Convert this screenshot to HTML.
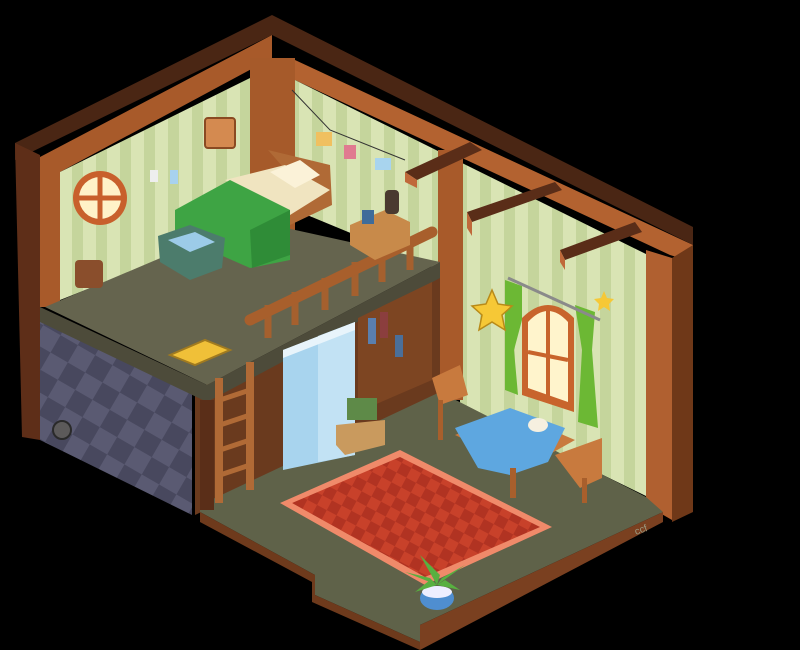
<!DOCTYPE html>
<html><head><meta charset="utf-8"><style>
html,body{margin:0;padding:0;background:#000;width:800px;height:650px;overflow:hidden}
svg{display:block}
</style></head><body>
<svg width="800" height="650" viewBox="0 0 800 650" xmlns="http://www.w3.org/2000/svg">
<defs>
<pattern id="stripe" width="24" height="24" patternUnits="userSpaceOnUse">
<rect width="24" height="24" fill="#d9e4b4"/><rect width="11" height="24" fill="#c5d59c"/>
</pattern>
<pattern id="chk" width="40" height="40" patternUnits="userSpaceOnUse" patternTransform="rotate(30)">
<rect width="40" height="40" fill="#5a5a72"/><rect width="20" height="20" fill="#48485e"/><rect x="20" y="20" width="20" height="20" fill="#48485e"/>
</pattern>
<pattern id="rug" width="22" height="22" patternUnits="userSpaceOnUse" patternTransform="rotate(28)">
<rect width="22" height="22" fill="#c8412a"/><rect width="11" height="11" fill="#b13322"/><rect x="11" y="11" width="11" height="11" fill="#b13322"/>
</pattern>
</defs>
<!-- outer frame top edge -->
<polygon points="15,143 272,15 693,227 693,245 272,35 15,160" fill="#4a2614"/>
<!-- left dark strip -->
<polygon points="15,143 40,155 40,440 22,437" fill="#5e2e18"/>
<!-- left frame band -->
<polygon points="40,157 272,35 272,58 60,172 60,307 40,307" fill="#a85a2a"/>
<!-- back post -->
<rect x="250" y="58" width="45" height="200" fill="#a65a2a"/>
<!-- left upper wall -->
<polygon points="60,172 250,78 250,225 60,300" fill="url(#stripe)"/>
<!-- right wall frame band -->
<polygon points="295,60 693,245 693,262 670,255 295,80" fill="#b36230"/>
<!-- right walls striped -->
<polygon points="295,80 440,152 440,270 295,210" fill="url(#stripe)"/>
<polygon points="460,162 648,255 648,497 460,405" fill="url(#stripe)"/>
<!-- right frame post -->
<polygon points="646,250 672,258 672,520 646,505" fill="#b06030"/>
<polygon points="672,258 693,245 693,512 672,522" fill="#6f3818"/>
<!-- middle post -->
<rect x="438" y="150" width="25" height="250" fill="#a85a2a"/>
<!-- beams -->
<polygon points="405,172 470,142 482,150 417,180" fill="#5a2d18"/><polygon points="405,172 417,180 417,188 405,182" fill="#c0693a"/>
<polygon points="467,212 555,182 562,190 472,222" fill="#5a2d18"/><polygon points="467,212 472,222 472,236 467,228" fill="#c0693a"/>
<polygon points="560,250 635,222 642,232 565,260" fill="#5a2d18"/><polygon points="560,250 565,260 565,270 560,262" fill="#c0693a"/>
<!-- checker lower left wall -->
<polygon points="40,320 192,393 192,515 40,440" fill="url(#chk)"/>
<circle cx="62" cy="430" r="9" fill="#5c5a5a" stroke="#2a2a2a" stroke-width="2"/>
<!-- lower back area behind loft -->
<polygon points="195,390 440,270 440,400 195,515" fill="#6a3a1e"/>
<!-- lower floor -->
<polygon points="200,505 440,392 646,497 663,512 420,625 420,642 315,595 315,575 200,512" fill="#5f6249"/>
<polygon points="200,512 315,575 315,595 420,642 420,650 312,602 312,582 200,522" fill="#6e3a1c"/>
<polygon points="420,625 663,512 663,522 420,650" fill="#7a4020"/>
<!-- loft floor -->
<polygon points="45,307 250,220 440,262 207,385" fill="#65644e"/>
<polygon points="40,307 207,385 207,402 40,322" fill="#4d4b3a"/>
<polygon points="207,385 440,262 440,278 207,402" fill="#4d4b3a"/>
<rect x="200" y="400" width="14" height="110" fill="#5a2e18"/>
<!-- door -->
<polygon points="283,350 355,322 355,455 283,470" fill="#a8d4ee"/>
<polygon points="318,336 355,322 355,455 318,462" fill="#c2e2f4"/>
<polygon points="283,350 355,322 355,330 283,358" fill="#e8f4fb"/>
<!-- bookshelf -->
<polygon points="358,318 432,282 432,380 358,412" fill="#7d4522"/>
<rect x="368" y="318" width="8" height="26" fill="#5a7fae"/><rect x="380" y="312" width="8" height="26" fill="#8b3e3e"/><rect x="395" y="335" width="8" height="22" fill="#4a6f9a"/>
<!-- boxes/books -->
<polygon points="336,425 385,420 385,445 345,455 336,445" fill="#c99a5e"/>
<rect x="347" y="398" width="30" height="22" fill="#5e8a48"/>
<!-- ladder -->
<rect x="215" y="378" width="8" height="125" fill="#b06a36"/><rect x="246" y="362" width="8" height="128" fill="#b06a36"/>
<g stroke="#b06a36" stroke-width="5"><line x1="220" y1="400" x2="250" y2="390"/><line x1="220" y1="425" x2="250" y2="415"/><line x1="220" y1="450" x2="250" y2="440"/><line x1="220" y1="475" x2="250" y2="465"/></g>
<!-- railing -->
<g stroke="#a5602e" stroke-width="7"><line x1="268" y1="305" x2="268" y2="338"/><line x1="295" y1="292" x2="295" y2="325"/><line x1="325" y1="278" x2="325" y2="310"/><line x1="355" y1="262" x2="355" y2="296"/><line x1="382" y1="252" x2="382" y2="282"/><line x1="410" y1="240" x2="410" y2="270"/></g>
<line x1="250" y1="320" x2="432" y2="232" stroke="#a85f2c" stroke-width="11" stroke-linecap="round"/>
<!-- yellow mat -->
<polygon points="170,355 205,340 230,350 195,365" fill="#f0c038" stroke="#a07a20" stroke-width="2"/>
<!-- round window -->
<circle cx="100" cy="198" r="27" fill="#c8602c"/>
<circle cx="100" cy="198" r="21" fill="#fff2c8"/>
<line x1="100" y1="176" x2="100" y2="220" stroke="#c8602c" stroke-width="5"/><line x1="78" y1="198" x2="122" y2="198" stroke="#c8602c" stroke-width="5"/>
<!-- sign -->
<rect x="205" y="118" width="30" height="30" rx="3" fill="#d48a50" stroke="#8a4a22" stroke-width="2"/>
<rect x="150" y="170" width="8" height="12" fill="#eee"/><rect x="170" y="170" width="8" height="14" fill="#a8d2ee"/>
<!-- bed -->
<polygon points="268,150 330,165 332,205 290,225 290,175" fill="#b06a36"/>
<polygon points="225,180 285,165 330,190 290,215" fill="#f0e4c0"/>
<polygon points="270,172 300,160 320,175 295,188" fill="#fbf2d8"/>
<polygon points="175,210 230,180 290,210 290,260 250,268 175,235" fill="#3ea444"/>
<polygon points="250,230 290,210 290,255 252,268" fill="#2f8c37"/>
<!-- chest -->
<polygon points="158,236 190,225 225,238 222,268 190,280 160,262" fill="#4c7c6c"/>
<polygon points="168,240 195,232 215,242 190,252" fill="#9ccbe8"/>
<!-- bag -->
<rect x="75" y="260" width="28" height="28" rx="4" fill="#8a4e2c"/>
<!-- nightstand -->
<polygon points="350,225 385,210 410,222 410,245 375,260 350,245" fill="#c88a4a"/>
<rect x="385" y="190" width="14" height="24" rx="4" fill="#4a3a30"/>
<rect x="362" y="210" width="12" height="14" fill="#3f6c9a"/>
<!-- photos -->
<polyline points="292,90 330,130 405,160" fill="none" stroke="#333" stroke-width="1"/>
<rect x="316" y="132" width="16" height="14" fill="#f0c060"/><rect x="344" y="145" width="12" height="14" fill="#e07a90"/><rect x="375" y="158" width="16" height="12" fill="#a8d4ee"/>
<!-- right window -->
<path d="M522,318 Q548,292 574,318 L574,412 L522,395 Z" fill="#c8642c"/>
<path d="M528,322 Q548,300 568,322 L568,402 L528,388 Z" fill="#fff4cc"/>
<line x1="548" y1="306" x2="548" y2="398" stroke="#c8642c" stroke-width="4"/><line x1="528" y1="352" x2="568" y2="360" stroke="#c8642c" stroke-width="4"/>
<polygon points="505,280 522,286 522,320 514,350 518,395 505,390" fill="#6cb834"/>
<polygon points="575,305 595,312 592,350 598,428 578,422 582,350" fill="#6cb834"/>
<line x1="508" y1="278" x2="600" y2="320" stroke="#8a8a8a" stroke-width="3"/>
<!-- stars -->
<polygon points="492,290 498,304 512,306 502,315 505,330 492,322 479,330 482,315 472,306 486,304" fill="#f6c836" stroke="#b88a18" stroke-width="1.5"/>
<polygon points="604,291 607,298 614,299 609,304 610,311 604,307 598,311 599,304 594,299 601,298" fill="#f6c836"/>
<!-- chairs & table -->
<polygon points="432,378 460,365 468,395 440,405" fill="#c87a3e"/><rect x="438" y="400" width="5" height="40" fill="#a85f2c"/>
<polygon points="455,435 510,412 575,440 525,468" fill="#c87a3e"/>
<polygon points="455,428 510,408 565,428 548,462 510,475 478,468" fill="#5ea7e0"/>
<rect x="510" y="468" width="6" height="30" fill="#a85f2c"/>
<ellipse cx="538" cy="425" rx="10" ry="7" fill="#f6f0e0"/>
<polygon points="555,455 602,438 602,478 580,488" fill="#c87a3e"/><rect x="582" y="478" width="5" height="25" fill="#a85f2c"/>
<!-- rug -->
<polygon points="280,503 400,450 552,527 425,585" fill="#f08a6a"/>
<polygon points="292,503 400,457 540,527 425,577" fill="url(#rug)"/>
<!-- plant -->
<ellipse cx="437" cy="598" rx="17" ry="12" fill="#4f8ed0"/>
<ellipse cx="437" cy="592" rx="15" ry="6" fill="#eef"/>
<g fill="#58b040"><polygon points="437,585 405,572 430,578"/><polygon points="437,585 465,565 442,578"/><polygon points="437,585 420,555 440,575"/><polygon points="437,585 460,590 445,580"/><polygon points="437,585 415,592 430,580"/></g>
<text x="636" y="535" font-family="Liberation Sans, sans-serif" font-size="10" fill="#9a9a80" transform="rotate(-20 636 535)">ccf</text>
</svg>
</body></html>
